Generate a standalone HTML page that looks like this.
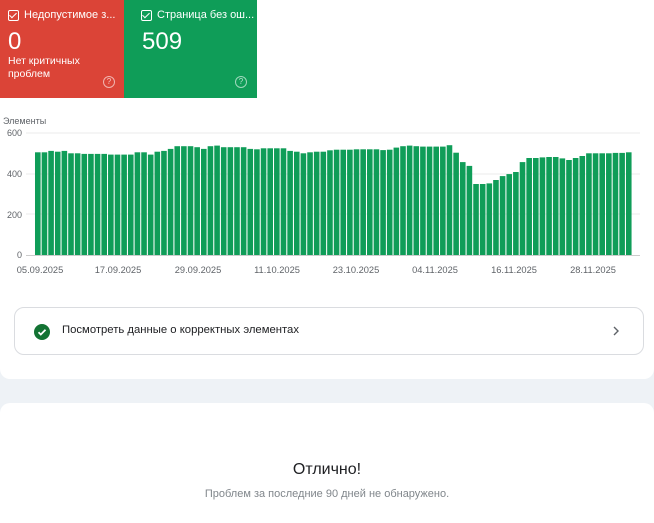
<!DOCTYPE html>
<html><head><meta charset="utf-8"><style>
*{margin:0;padding:0;box-sizing:border-box}
body{width:654px;height:512px;overflow:hidden;background:#eef2f6;font-family:"Liberation Sans",Roboto,sans-serif;position:relative}
.top{position:absolute;left:0;top:0;width:654px;height:379px;background:#fff;border-radius:0 0 10px 10px}
.bot{position:absolute;left:0;top:403px;width:654px;height:120px;background:#fff;border-radius:10px 10px 0 0}
.tile{position:absolute;top:0;height:98px;color:#fff}
.tile .h{position:absolute;left:8px;top:9px;font-size:11px;display:flex;align-items:center;gap:5px}
.cb{width:11px;height:11px;border:1.3px solid #fff;border-radius:2px;position:relative}
.cb:after{content:"";position:absolute;left:2px;top:0px;width:3px;height:6px;border:solid #fff;border-width:0 1.5px 1.5px 0;transform:rotate(45deg)}
.num{position:absolute;left:8px;top:28px;font-size:24px}
.q{position:absolute;width:12px;height:12px;border:1px solid rgba(255,255,255,.6);border-radius:50%;font-size:8px;text-align:center;line-height:10px;color:rgba(255,255,255,.7)}
.card{position:absolute;left:14px;top:307px;width:630px;height:48px;border:1px solid #dadce0;border-radius:10px}
</style></head><body>
<div class="top"></div>
<div class="tile" style="left:0;width:124px;background:#db4437">
<div class="h"><span class="cb"></span>Недопустимое з...</div>
<div class="num">0</div>
<div style="position:absolute;left:8px;top:55px;font-size:10.5px;line-height:13px">Нет критичных<br>проблем</div>
<div class="q" style="left:103px;top:76px">?</div>
</div>
<div class="tile" style="left:124px;width:133px;background:#0f9d58">
<div class="h" style="left:17px"><span class="cb"></span>Страница без ош...</div>
<div class="num" style="left:18px">509</div>
<div class="q" style="left:111px;top:76px">?</div>
</div>
<svg style="position:absolute;left:0;top:110px" width="654" height="170" id="ch">
<text x="3" y="14" font-size="9" fill="#5f6368" font-family="Liberation Sans">Элементы</text>
<g font-size="9" fill="#5f6368" font-family="Liberation Sans" text-anchor="end">
<text x="22" y="26">600</text><text x="22" y="67">400</text><text x="22" y="108">200</text><text x="22" y="148">0</text></g>
<g stroke="#ebebeb" stroke-width="1"><line x1="26" x2="640" y1="23" y2="23"/><line x1="26" x2="640" y1="64" y2="64"/><line x1="26" x2="640" y1="104" y2="104"/></g>
<g id="bars" fill="#0f9d58"></g>
<line x1="26" x2="640" y1="145.5" y2="145.5" stroke="#ccc"/>
<g font-size="9.3" fill="#5f6368" font-family="Liberation Sans" text-anchor="middle">
<text x="40" y="163">05.09.2025</text><text x="118" y="163">17.09.2025</text><text x="198" y="163">29.09.2025</text><text x="277" y="163">11.10.2025</text><text x="356" y="163">23.10.2025</text><text x="435" y="163">04.11.2025</text><text x="514" y="163">16.11.2025</text><text x="593" y="163">28.11.2025</text></g>
</svg>
<div class="card">
<svg style="position:absolute;left:19px;top:16px" width="16" height="16" viewBox="0 0 16 16"><circle cx="8" cy="8" r="8" fill="#137333"/><path d="M4.5 8.2l2.3 2.3 4.7-4.7" stroke="#fff" stroke-width="1.8" fill="none"/></svg>
<div style="position:absolute;left:47px;top:16px;font-size:11.3px;color:#202124">Посмотреть данные о корректных элементах</div>
<svg style="position:absolute;left:597px;top:17px" width="8" height="12"><path d="M2 2l4 4-4 4" stroke="#5f6368" stroke-width="1.4" fill="none"/></svg>
</div>
<div class="bot"></div>
<div style="position:absolute;left:0;width:654px;top:461px;text-align:center;font-size:16px;color:#202124">Отлично!</div>
<div style="position:absolute;left:0;width:654px;top:488px;text-align:center;font-size:11px;color:#80868b">Проблем за последние 90 дней не обнаружено.</div>
<script>
var v=[505,505,512,508,512,500,500,497,497,497,497,494,494,494,494,505,505,494,508,512,522,535,535,535,530,522,535,538,530,530,530,530,522,520,525,525,525,525,512,508,500,505,508,508,515,
518,518,518,520,520,520,520,516,518,528,535,538,535,533,533,533,533,540,503,457,438,349,349,352,369,388,398,408,457,477,477,480,482,482,475,467,477,487,500,500,500,500,502,502,505];
var g=document.getElementById('bars'),s='';
for(var i=0;i<v.length;i++){var h=v[i]*122/600;var x=35+i*6.64;s+='<rect x="'+x.toFixed(2)+'" y="'+(145-h).toFixed(1)+'" width="5.6" height="'+h.toFixed(1)+'"/>';}
g.innerHTML=s;
</script>
</body></html>
